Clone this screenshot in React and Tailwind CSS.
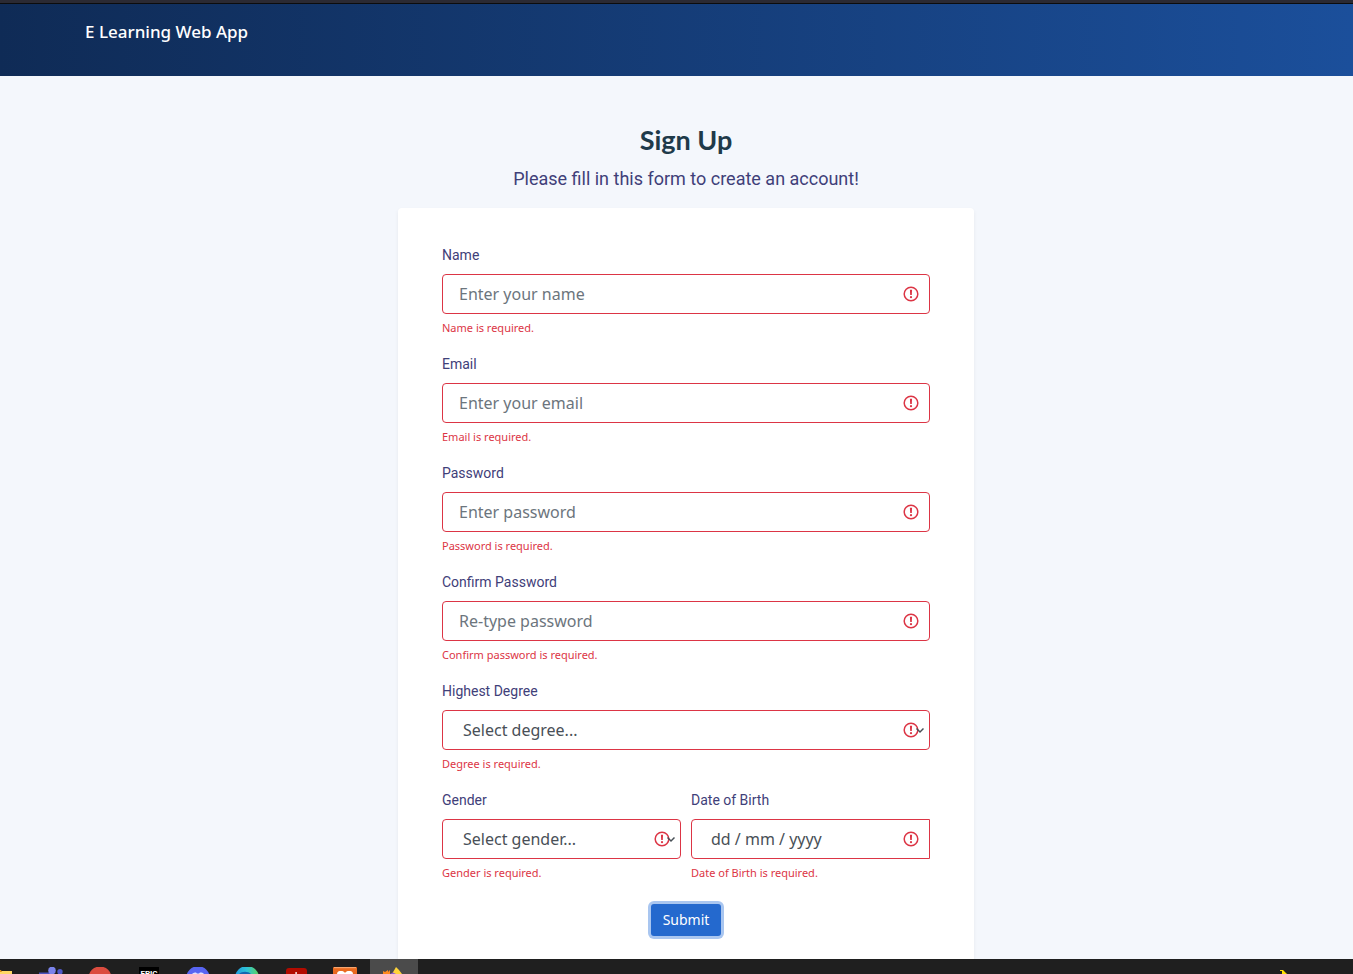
import { useState } from "react";

function AlertMark({ className }) {
  return (
    <svg
      className={"pointer-events-none absolute top-1/2 size-4 -translate-y-1/2 " + className}
      viewBox="0 0 16 16"
      fill="none"
      aria-hidden="true"
    >
      <circle cx="8" cy="8" r="6.8" stroke="#dc3545" strokeWidth="1.5" />
      <path d="M6.900 3.800h2.200l-.3 5.200h-1.600z" fill="#dc3545" />
      <circle cx="8" cy="11.2" r="1.1" fill="#dc3545" />
    </svg>
  );
}

function Chevron() {
  return (
    <svg
      className="pointer-events-none absolute right-[6px] top-1/2 h-2 w-2 -translate-y-1/2"
      viewBox="0 0 8 8"
      fill="none"
      aria-hidden="true"
    >
      <path d="M0.5 2.500L4 6L7.500 2.500" stroke="#495057" strokeWidth="1.5" />
    </svg>
  );
}

function Field({ id, label, error, children }) {
  return (
    <div className="mb-4 min-w-0">
      <label htmlFor={id} className="block font-['Roboto',sans-serif] text-[14px] leading-[22px] text-[#3f4079]">
        {label}
      </label>
      <div className="relative mt-2">{children}</div>
      <p id={id + "-error"} className="mt-1 text-[11px] leading-[19px] text-[#dc3545]">
        {error}
      </p>
    </div>
  );
}

const control =
  "block h-10 w-full border border-[#dc3545] bg-white text-[16px] leading-6 text-[#495057] outline-none";

function TextField({ id, label, placeholder, error, type = "text" }) {
  return (
    <Field id={id} label={label} error={error}>
      <input
        id={id}
        type={type}
        placeholder={placeholder}
        aria-invalid="true"
        aria-describedby={id + "-error"}
        className={control + " rounded pl-4 pr-10 placeholder:text-[#6c757d]"}
      />
      <AlertMark className="right-[11px]" />
    </Field>
  );
}

function SelectField({ id, label, placeholder, options, error }) {
  const [value, setValue] = useState("");
  return (
    <Field id={id} label={label} error={error}>
      <select
        id={id}
        value={value}
        onChange={(e) => setValue(e.target.value)}
        aria-invalid="true"
        aria-describedby={id + "-error"}
        className={control + " appearance-none rounded pl-5 pr-10"}
      >
        <option value="">{placeholder}</option>
        {options.map((o) => (
          <option key={o}>{o}</option>
        ))}
      </select>
      <AlertMark className="right-[11px]" />
      <Chevron />
    </Field>
  );
}

function Slot({ children, active }) {
  return (
    <div className={"flex w-12 shrink-0 items-end justify-center " + (active ? "bg-[#4b4b4b]" : "")}>
      <svg className="h-[7px] w-6" viewBox="0 0 24 7" aria-hidden="true">
        {children}
      </svg>
    </div>
  );
}

function Taskbar() {
  return (
    <footer className="flex h-[15px] shrink-0 gap-px overflow-hidden bg-[#1f1f1f]">
      <div className="flex w-[26px] shrink-0 items-end">
        <svg className="h-[7px] w-3" viewBox="0 0 12 7" aria-hidden="true">
          <path d="M0 4h12v3H0z" fill="#ffd764" />
          <path d="M0 3h1l1 2h-2z" fill="#d98c1a" />
        </svg>
      </div>
      <Slot>
        <path d="M0 5.500h14v1.500H0z" fill="#4b53bc" />
        <circle cx="13" cy="3.5" r="3.8" fill="#7b83eb" />
        <circle cx="21" cy="4.8" r="2.7" fill="#5059c9" />
      </Slot>
      <Slot>
        <circle cx="12" cy="11" r="11.5" fill="#db4c3f" />
      </Slot>
      <Slot>
        <rect x="2" y="-1" width="20" height="12" fill="#000" />
        <text x="12" y="8.5" textAnchor="middle" fontSize="8" fontWeight="700" fontFamily="Roboto, sans-serif" fill="#fff">
          EPIC
        </text>
      </Slot>
      <Slot>
        <circle cx="12" cy="11" r="11.8" fill="#5865f2" />
        <path d="M6 7c1-1.500 3-1.500 4-1.500l1 1h2l1-1c2 0 3 0 4 1.500z" fill="#dfe2ff" />
      </Slot>
      <Slot>
        <defs>
          <linearGradient id="wave">
            <stop offset="0" stopColor="#1e9be0" />
            <stop offset="0.5" stopColor="#2fc3d6" />
            <stop offset="1" stopColor="#5fd35a" />
          </linearGradient>
        </defs>
        <circle cx="12" cy="11" r="12" fill="url(#wave)" />
        <path d="M4 7c3-3 9-3 12 0z" fill="#1367b0" />
      </Slot>
      <Slot>
        <rect x="2" y="1" width="21" height="14" rx="3" fill="#b30b00" />
        <path d="M11.500 7c-.5-1.500 0-2 .6-2s1.100.5.6 2z" fill="#fff" />
      </Slot>
      <Slot>
        <rect x="0" y="0" width="24" height="12" rx="1" fill="#ea6a1f" />
        <path d="M1 0h22v1.200H1z" fill="#f6a56e" />
        <path d="M4 7c0-2.500 2-3 4-3s3 .5 4 2c1-1.500 2-2 4-2s4 .5 4 3z" fill="#fff" />
      </Slot>
      <Slot active>
        <path d="M1 7v-3l2 1 3-2v2l2-2v4z" fill="#ff8a1e" />
        <path d="M10 7l4-7 3 3 3 4z" fill="#ffd43a" />
        <path d="M8 7l3-1.500 3 1.500z" fill="#9059d6" />
      </Slot>
      <div className="flex flex-1 items-end justify-end pr-[66px]">
        <svg className="h-1 w-[7px]" viewBox="0 0 7 4" aria-hidden="true">
          <path d="M0 0h3l3 3 1 1H2V1H0z" fill="#ffe000" />
        </svg>
      </div>
    </footer>
  );
}

export default function App() {
  return (
    <div className="flex h-screen flex-col overflow-hidden bg-[#f4f7fc] font-['Noto_Sans',sans-serif]">
      <div className="h-1 shrink-0 border-b border-[#0c0c0d] bg-[#2b2a33]" />
      <header className="h-[72px] shrink-0 bg-linear-to-r from-[#0f2b56] to-[#1b4f9b] px-[85px] pt-4">
        <a href="#home" className="text-[17px] font-medium leading-6 text-white">
          E Learning Web App
        </a>
      </header>
      <main className="flex min-h-0 flex-1 flex-col items-center overflow-hidden pl-[19px] pt-12">
        <h1 className="font-['Lato',sans-serif] text-[27px] font-bold leading-8 text-[#1f3a4a]">Sign Up</h1>
        <p className="mt-2 font-['Roboto',sans-serif] text-[18px] leading-[30px] text-[#3f4079]">
          Please fill in this form to create an account!
        </p>
        <form
          noValidate
          onSubmit={(e) => e.preventDefault()}
          className="mt-[14px] w-full max-w-[576px] rounded bg-white px-11 pb-11 pt-9 shadow-[0_2px_4px_rgba(0,0,0,0.06)]"
        >
          <TextField id="name" label="Name" placeholder="Enter your name" error="Name is required." />
          <TextField id="email" type="email" label="Email" placeholder="Enter your email" error="Email is required." />
          <TextField id="password" type="password" label="Password" placeholder="Enter password" error="Password is required." />
          <TextField
            id="confirm"
            type="password"
            label="Confirm Password"
            placeholder="Re-type password"
            error="Confirm password is required."
          />
          <SelectField
            id="degree"
            label="Highest Degree"
            placeholder="Select degree..."
            options={["High School", "Bachelor", "Master", "Doctorate"]}
            error="Degree is required."
          />
          <div className="grid grid-cols-2 gap-[10px]">
            <SelectField
              id="gender"
              label="Gender"
              placeholder="Select gender..."
              options={["Female", "Male", "Other"]}
              error="Gender is required."
            />
            <Field id="dob" label="Date of Birth" error="Date of Birth is required.">
              <input
                id="dob"
                type="text"
                placeholder="dd / mm / yyyy"
                aria-invalid="true"
                aria-describedby="dob-error"
                className={control + " rounded-l pl-[19px] pr-10 placeholder:text-[#495057]"}
              />
              <AlertMark className="right-[11px]" />
            </Field>
          </div>
          <div className="flex justify-center pt-1.5">
            <button
              type="submit"
              className="h-8 rounded-[3px] bg-[#2469ce] px-3 text-[14px] leading-5 text-white shadow-[0_0_0_3px_#a9c6f0]"
            >
              Submit
            </button>
          </div>
        </form>
      </main>
      <Taskbar />
    </div>
  );
}
